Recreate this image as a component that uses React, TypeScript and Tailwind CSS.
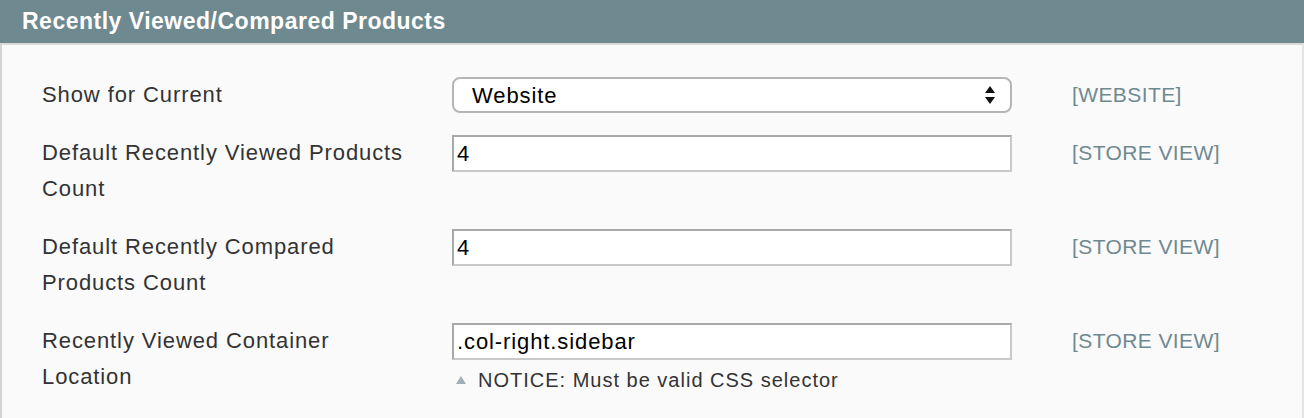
import React from "react";

type Row = {
  label: string[];
  value: string;
  scope: string;
  select?: boolean;
  notice?: string;
};

const rows: Row[] = [
  { label: ["Show for Current"], value: "Website", scope: "[WEBSITE]", select: true },
  { label: ["Default Recently Viewed Products", "Count"], value: "4", scope: "[STORE VIEW]" },
  { label: ["Default Recently Compared", "Products Count"], value: "4", scope: "[STORE VIEW]" },
  {
    label: ["Recently Viewed Container", "Location"],
    value: ".col-right.sidebar",
    scope: "[STORE VIEW]",
    notice: "NOTICE: Must be valid CSS selector",
  },
];

const Arrows = () => (
  <svg width="12" height="22" viewBox="0 0 12 22">
    <path d="M6 2 L11 9 H1 Z" fill="#111" />
    <path d="M6 20 L11 13 H1 Z" fill="#111" />
  </svg>
);

const App = () => {
  return (
    <div
      className="w-[1304px] h-[418px] bg-[#fafafa] text-[#333]"
      style={{ fontFamily: '"Liberation Sans", Arial, sans-serif' }}
    >
      <div className="h-[43px] bg-[#6f8991] pl-[22px] flex items-center">
        <h3 className="text-white font-bold text-[23px] tracking-[0.5px]">Recently Viewed/Compared Products</h3>
      </div>
      <div className="h-[375px] border-t-2 border-t-[#d9d9d9] border-l-2 border-l-[#d3d3d3] border-r-2 border-r-[#e4e4e4] pl-[40px] pt-[32px] flex flex-col gap-[22px]">
        {rows.map((r, i) => (
          <div key={i} className="flex items-start">
            <div className="w-[410px] text-[22px] tracking-[0.9px] leading-[36px]">
              {r.label.map((l, j) => (
                <div key={j}>{l}</div>
              ))}
            </div>
            <div className="w-[560px]">
              {r.select ? (
                <div className="h-[36px] rounded-[8px] border-2 border-[#b5b5b5] bg-white flex items-center justify-between pl-[18px] pr-[14px] text-[22px] tracking-[0.9px] text-black">
                  <span>Website</span>
                  <Arrows />
                </div>
              ) : (
                <div className="h-[37px] border-2 border-t-[#a9a9a9] border-l-[#a9a9a9] border-r-[#c9c9c9] border-b-[#c9c9c9] bg-white flex items-center pl-[3px] text-[22px] tracking-[0.9px] text-black">
                  {r.value}
                </div>
              )}
              {r.notice && (
                <div className="flex items-center mt-[5px] text-[20px] tracking-[1px] text-[#333]">
                  <svg width="10" height="8" viewBox="0 0 10 8" className="ml-[4px] mr-[12px]">
                    <path d="M5 0 L10 8 H0 Z" fill="#9fb0b7" />
                  </svg>
                  {r.notice}
                </div>
              )}
            </div>
            <div className="ml-[60px] text-[21px] tracking-[0.4px] leading-[36px] text-[#6f8991]">{r.scope}</div>
          </div>
        ))}
      </div>
    </div>
  );
};

export default App;
